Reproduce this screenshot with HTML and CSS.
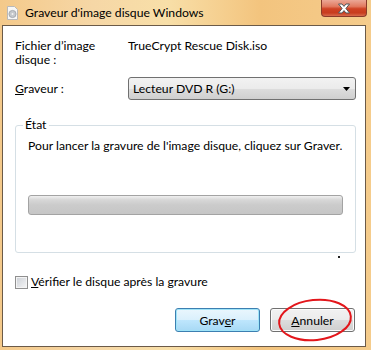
FILE: index.html
```html
<!DOCTYPE html>
<html>
<head>
    <title>Graveur d'image disque Windows</title>
    <link rel="stylesheet" href="styles.css">
</head>
<body>

<div class="window">
    <div class="titlebar">
        <svg class="app-icon" width="13" height="14" viewBox="0 0 13 14">
            <path d="M1.5 0.5 H8.5 L11.5 3.5 V13.5 H1.5 Z" fill="#f7f7f7" stroke="#b9b9b9"/>
            <circle cx="6.5" cy="8" r="3.6" fill="#c4c8cc" stroke="#9aa0a6" stroke-width="0.8"/>
            <circle cx="6.5" cy="8" r="1" fill="#f2f2f2"/>
        </svg>
        <span class="title">Graveur d'image disque Windows</span>
        <div class="close-btn">
            <svg width="14" height="11" viewBox="0 0 14 11">
                <path d="M1.5 1 H5 L7 3.4 L9 1 H12.5 L8.9 5.5 L12.5 10 H9 L7 7.6 L5 10 H1.5 L5.1 5.5 Z" fill="#ffffff" stroke="#55585c" stroke-width="1" stroke-linejoin="round"/>
            </svg>
        </div>
    </div>

    <div class="client">
        <div class="form-grid">
            <div class="label">Fichier d’image<br>disque :</div>
            <div class="value">TrueCrypt Rescue Disk.iso</div>
            <div class="label label-mid"><u>G</u>raveur :</div>
            <div class="combo">
                <span>Lecteur DVD R (G:)</span>
                <svg class="combo-arrow" width="7" height="4" viewBox="0 0 7 4"><path d="M0 0 H7 L3.5 4 Z" fill="#000"/></svg>
            </div>
        </div>

        <fieldset class="status">
            <legend>État</legend>
            <p class="status-text">Pour lancer la gravure de l'image disque, cliquez sur Graver.</p>
            <div class="progress"></div>
        </fieldset>
        <span class="stray-dot"></span>

        <label class="check">
            <span class="check-box"></span>
            <span><u>V</u>érifier le disque après la gravure</span>
        </label>

        <div class="buttons">
            <button class="btn btn-default">Grav<u>e</u>r</button>
            <button class="btn"><u>A</u>nnuler
                <!-- red circle drawn over the button in the screenshot -->
                <svg class="mark" width="78" height="46" viewBox="0 0 78 46">
                    <ellipse cx="39" cy="23" rx="36" ry="20" fill="none" stroke="#e3161b" stroke-width="2" transform="rotate(-6 39 23)"/>
                </svg>
            </button>
        </div>
    </div>
</div>

</body>
</html>
```

FILE: styles.css
```css
body {
    margin: 0;
    font-family: 'Lato', 'Liberation Sans', sans-serif;
    font-size: 12.2px;
    color: #000;
}
.window {
    width: 371px;
    height: 350px;
    background: linear-gradient(to right, #f4c98a 0%, #f6d7a6 25%, #f8dfa8 45%, #f3c47e 70%, #f5cc8c 100%);
    box-sizing: border-box;
    overflow: hidden;
}
.titlebar {
    height: 25px;
    display: flex;
    align-items: flex-start;
    position: relative;
}
.app-icon {
    margin: 6px 0 0 6px;
}
.title {
    margin: 5px 0 0 6px;
    line-height: 15px;
    font-size: 12.2px;
}
.close-btn {
    position: absolute;
    left: 321px;
    top: 0;
    width: 46px;
    height: 17px;
    box-sizing: border-box;
    border: 1px solid #8a3a2a;
    border-top: none;
    border-radius: 0 0 4px 4px;
    background: linear-gradient(#eba796 0%, #e27a60 40%, #cf4224 55%, #c83c1e 80%, #d86a4c 100%);
    display: flex;
    align-items: center;
    justify-content: center;
}
.client {
    margin-left: 2px;
    width: 364px;
    height: 322px;
    box-sizing: border-box;
    border: 1px solid #6b5a48;
    background: #fff;
    padding: 13px 9px 0 12px;
}
.form-grid {
    display: grid;
    grid-template-columns: 113px 1fr;
    row-gap: 10px;
    line-height: 14px;
}
.label-mid {
    align-self: center;
}
.combo {
    height: 23px;
    box-sizing: border-box;
    border: 1px solid #707070;
    border-radius: 3px;
    background: linear-gradient(#f2f2f2 0%, #ebebeb 50%, #dddddd 51%, #cfcfcf 100%);
    display: flex;
    align-items: center;
    justify-content: space-between;
    padding: 0 5px 0 4px;
}
.status {
    margin: 18px 0 0 0;
    padding: 0 12px 0 12px;
    border: 1px solid #d5dfe5;
    border-radius: 3px;
    min-width: 0;
}
.status legend {
    margin-left: -5px;
    padding: 0 2px;
    line-height: 14px;
}
.status-text {
    margin: 7px 0 0 0;
    line-height: 14px;
    white-space: nowrap;
}
.progress {
    margin: 42px 0 37px 0;
    height: 20px;
    box-sizing: border-box;
    border: 1px solid #a3a3a3;
    border-radius: 3px;
    background: linear-gradient(#f0f0f0 0%, #d8d8d8 20%, #cbcbcb 50%, #c6c6c6 100%);
}
.stray-dot {
    display: block;
    width: 2px;
    height: 2px;
    background: #222;
    margin: 3px 0 0 323px;
}
.check {
    display: flex;
    align-items: center;
    gap: 3px;
    margin-top: 17px;
    line-height: 14px;
}
.check-box {
    width: 13px;
    height: 13px;
    box-sizing: border-box;
    border: 1px solid #8f8f8f;
    background: linear-gradient(135deg, #cbcfd5 0%, #f6f6f6 100%);
    box-shadow: inset 0 0 0 1px #f4f4f4;
}
.buttons {
    display: flex;
    justify-content: flex-end;
    gap: 10px;
    margin: 19px 1px 0 0;
}
.btn {
    position: relative;
    width: 85px;
    height: 24px;
    padding: 0;
    font-family: inherit;
    font-size: 12.2px;
    color: #000;
    border: 1px solid #707070;
    border-radius: 3px;
    background: linear-gradient(#f2f2f2 0%, #ebebeb 50%, #dddddd 51%, #cfcfcf 100%);
    box-shadow: inset 0 0 0 1px #fcfcfc;
}
.btn-default {
    border-color: #3c7fb1;
    background: linear-gradient(#eaf6fd 0%, #d9f0fc 50%, #bee6fd 51%, #a7d9f5 100%);
    box-shadow: inset 0 0 0 1px #9fe4f8;
}
.mark {
    position: absolute;
    left: 5px;
    top: -12px;
}
```
